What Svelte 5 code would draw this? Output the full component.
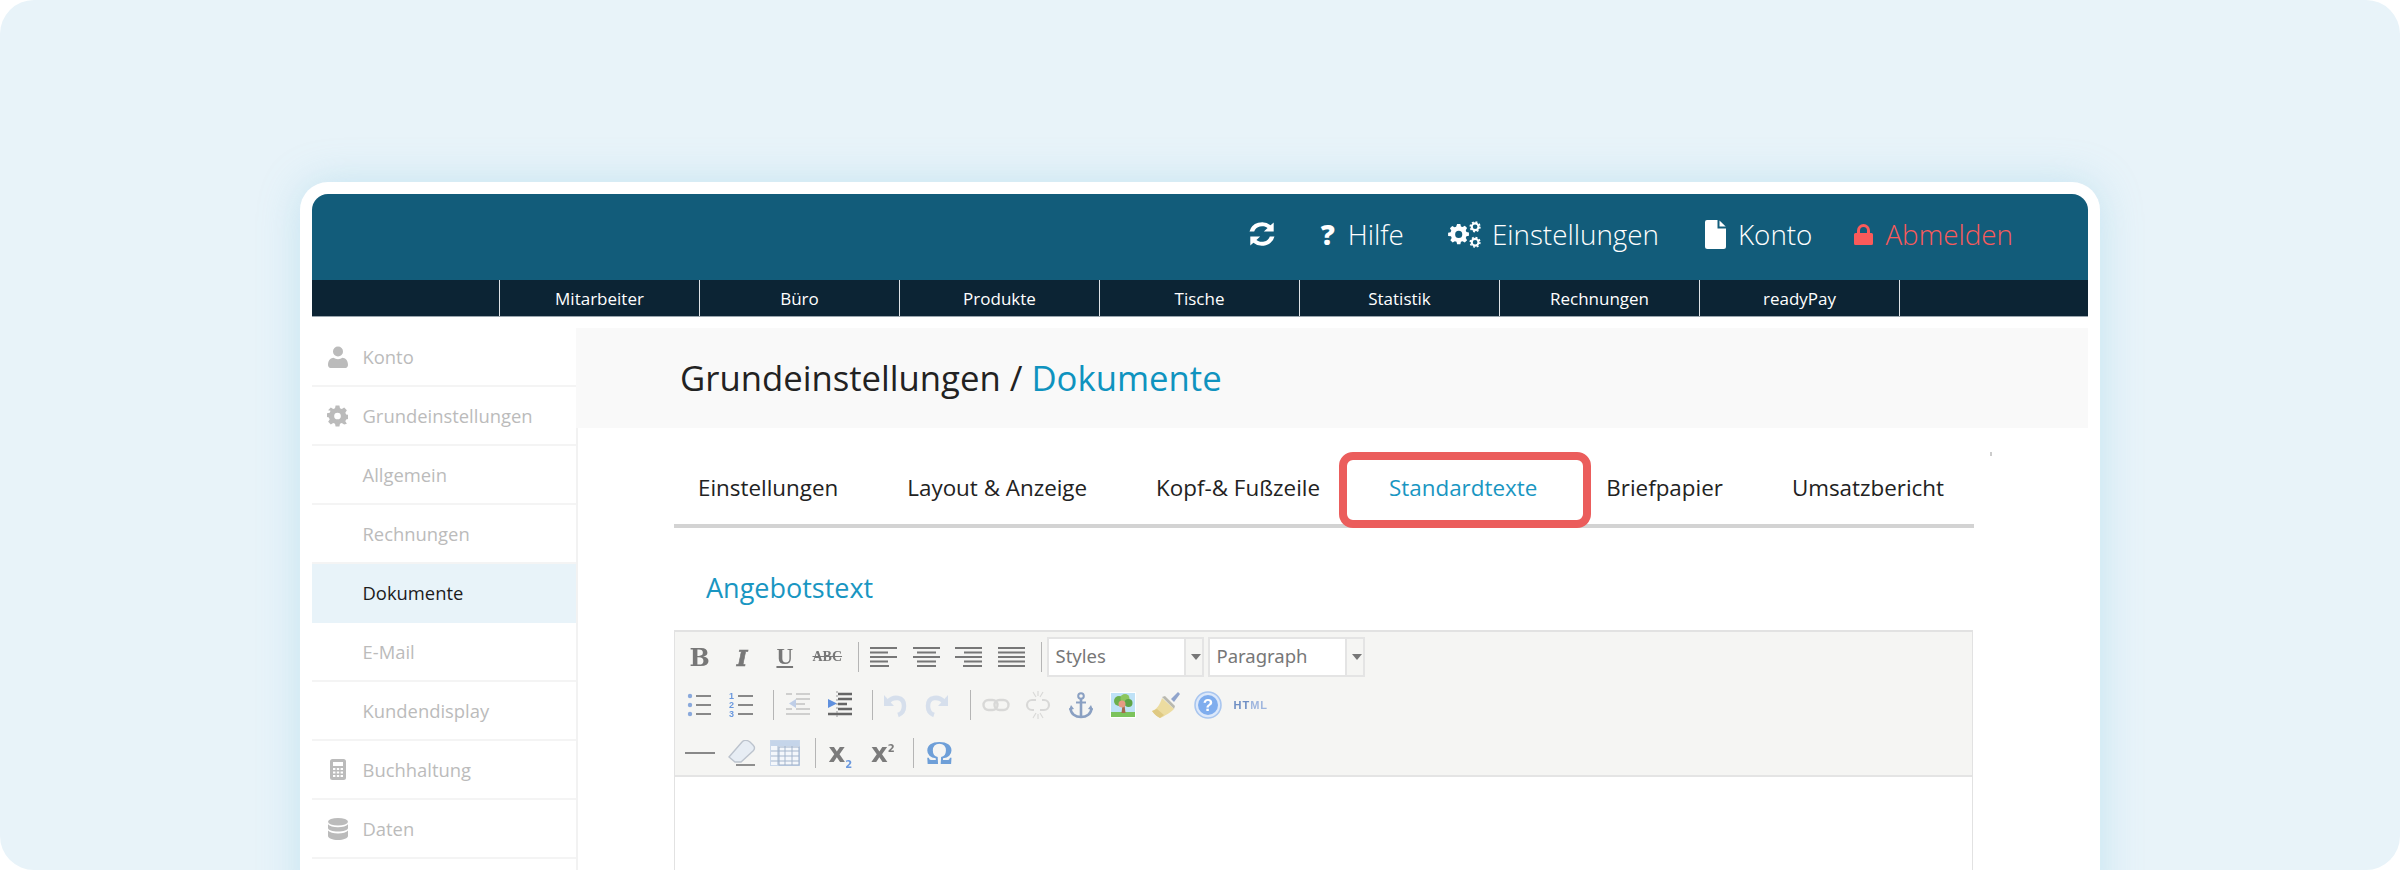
<script>
  const subNav = ['Mitarbeiter', 'Büro', 'Produkte', 'Tische', 'Statistik', 'Rechnungen', 'readyPay'];
  const side = [
    { label: 'Konto', icon: 'user' },
    { label: 'Grundeinstellungen', icon: 'gear' },
    { label: 'Allgemein' },
    { label: 'Rechnungen' },
    { label: 'Dokumente', active: true },
    { label: 'E-Mail' },
    { label: 'Kundendisplay' },
    { label: 'Buchhaltung', icon: 'calc' },
    { label: 'Daten', icon: 'db' }
  ];
  const tabs = ['Einstellungen', 'Layout & Anzeige', 'Kopf-& Fußzeile', 'Standardtexte', 'Briefpapier', 'Umsatzbericht'];
</script>

<div class="page">
  <div class="card">
    <div class="inner">
      <header class="top">
        <svg class="ico refresh" viewBox="2 2 20 20" fill="#fff" preserveAspectRatio="none">
          <path d="M21 2.400v7.600h-7.600l2.900-2.900A6.300 6.300 0 0 0 6 10H2.400A9.800 9.800 0 0 1 18.600 4.800z"/>
          <path d="M3 21.600V14h7.600l-2.900 2.900A6.300 6.300 0 0 0 18 14h3.600A9.800 9.800 0 0 1 5.400 19.200z"/>
        </svg>
        <a class="tl"><b class="q">?</b>Hilfe</a>
        <a class="tl tight">
          <svg class="ico cogs" viewBox="0 0 34 28" fill="#fff">
            <path fill-rule="evenodd" transform="translate(-1 -3)" d="M10.300 6h3.400l.6 2.600 1.700.7 2.300-1.400 2.400 2.400-1.400 2.300.7 1.700 2.600.6v3.400l-2.600.6-.7 1.700 1.400 2.300-2.400 2.400-2.300-1.400-1.700.7-.6 2.600h-3.400l-.6-2.600-1.700-.7-2.300 1.400-2.400-2.400 1.400-2.300-.7-1.700L1 18.600v-3.400l2.600-.6.7-1.700-1.400-2.300 2.400-2.400 2.300 1.400 1.700-.7zM12 13.200a3.700 3.700 0 1 0 0 7.400 3.700 3.700 0 0 0 0-7.400z"/>
            <g fill="none" stroke="#fff">
              <circle cx="28" cy="6" r="3.500" stroke-width="2.200"/>
              <circle cx="28" cy="6" r="5" stroke-width="1.600" stroke-dasharray="2 1.900"/>
              <circle cx="28" cy="22" r="3.500" stroke-width="2.200"/>
              <circle cx="28" cy="22" r="5" stroke-width="1.600" stroke-dasharray="2 1.900"/>
            </g>
          </svg>
          Einstellungen
        </a>
        <a class="tl">
          <svg class="ico file" viewBox="0 0 21 29" fill="#fff"><path d="M2 0H12.500V8.500H21V26.500A2.500 2.500 0 0 1 18.500 29H2.500A2.500 2.500 0 0 1 0 26.500V2A2 2 0 0 1 2 0z"/><path d="M14.500.5 20.700 6.500H14.500z"/></svg>
          Konto
        </a>
        <a class="tl red">
          <svg class="ico lock" viewBox="0 0 19 21" fill="#fa5a5a"><path d="M3 9V6.500a6.500 6.500 0 0 1 13 0V9h1.500A1.500 1.500 0 0 1 19 10.500v9A1.500 1.500 0 0 1 17.500 21H1.500A1.500 1.500 0 0 1 0 19.500v-9A1.500 1.500 0 0 1 1.500 9zM6 9h7V6.500a3.500 3.500 0 0 0-7 0z"/></svg>
          Abmelden
        </a>
      </header>

      <nav class="sub">
        {#each subNav as s}
          <span class="si">{s}</span>
        {/each}
      </nav>

      <div class="body">
        <aside class="side">
          {#each side as item}
            <div class="row" class:active={item.active}>
              <span class="ri">
                {#if item.icon === 'user'}
                  <svg viewBox="0 0 20 22" width="20" height="22" fill="#bbb"><circle cx="10" cy="5.500" r="5"/><path d="M0 19c0-5 3-7 5.500-7.200 1.300.9 2.800 1.400 4.500 1.400s3.200-.5 4.500-1.400C17 12 20 14 20 19c0 1.500-1 3-2.500 3h-15C1 22 0 20.500 0 19z"/></svg>
                {:else if item.icon === 'gear'}
                  <svg viewBox="0 0 22 22" width="21" height="22" fill="#bbb"><path fill-rule="evenodd" d="M9 0h4l.6 2.900 1.900.8L18 2.100l2.800 2.900-1.600 2.500.8 1.900 2.900.6v4l-2.900.6-.8 1.900 1.600 2.500L18 20l-2.500-1.600-1.900.8L13 22H9l-.6-2.800-1.900-.8L4 20l-2.800-2.900 1.600-2.500-.8-1.900-2-.6v-4l2.900-.6.8-1.900L1.100 5 4 2.100l2.500 1.600 1.900-.8zM11 7.500a3.500 3.500 0 1 0 0 7 3.500 3.500 0 0 0 0-7z"/></svg>
                {:else if item.icon === 'calc'}
                  <svg viewBox="0 0 16 21" width="16" height="21"><rect width="16" height="21" rx="2.500" fill="#bbb"/><rect x="3" y="3" width="10" height="4" fill="#fff"/><g fill="#fff"><rect x="3" y="9" width="2.400" height="2"/><rect x="6.800" y="9" width="2.400" height="2"/><rect x="10.600" y="9" width="2.400" height="2"/><rect x="3" y="12.500" width="2.400" height="2"/><rect x="6.800" y="12.500" width="2.400" height="2"/><rect x="10.600" y="12.500" width="2.400" height="2"/><rect x="3" y="16" width="2.400" height="2"/><rect x="6.800" y="16" width="2.400" height="2"/><rect x="10.600" y="16" width="2.400" height="2"/></g></svg>
                {:else if item.icon === 'db'}
                  <svg viewBox="0 0 20 22" width="20" height="22" fill="#bbb"><ellipse cx="10" cy="3.800" rx="10" ry="3.800"/><path d="M0 6.200c1.500 2 5.500 3 10 3s8.500-1 10-3V10c0 2-4.500 3.500-10 3.500S0 12 0 10z"/><path d="M0 12.400c1.500 2 5.500 3 10 3s8.500-1 10-3V18c0 2.200-4.500 4-10 4S0 20.200 0 18z"/></svg>
                {/if}
              </span>
              <span>{item.label}</span>
            </div>
          {/each}
        </aside>

        <main class="main">
          <div class="title">Grundeinstellungen / <span>Dokumente</span></div>
          <div class="content">
            <i class="tick"></i>
            <div class="tabs">
              {#each tabs as t, i}
                <span class="tab" class:on={i === 3}>{t}</span>
              {/each}
            </div>
            <h2>Angebotstext</h2>

            <div class="editor">
              <div class="toolbar">
                <div class="tr">
                  <span class="b bold">B</span>
                  <span class="b ital">I</span>
                  <span class="b und">U</span>
                  <span class="b abc">ABC</span>
                  <i class="sep a1"></i>
                  {#each ['l','c','r','j'] as a}
                    <span class="b"><svg width="27" height="22" viewBox="0 0 27 22" stroke="#777" stroke-width="1.800">
                      {#if a === 'l'}<path d="M0 2h27M0 6.500h18M0 11h27M0 15.500h18M0 20h19"/>
                      {:else if a === 'c'}<path d="M0 2h27M4 6.500h19M0 11h27M4 15.500h19M4 20h19"/>
                      {:else if a === 'r'}<path d="M0 2h27M9 6.500h18M0 11h27M9 15.500h18M8 20h19"/>
                      {:else}<path d="M0 2h27M0 6.500h27M0 11h27M0 15.500h27M0 20h27"/>{/if}
                    </svg></span>
                  {/each}
                  <i class="sep a2"></i>
                  <div class="combo"><span>Styles</span><em></em></div>
                  <div class="combo"><span>Paragraph</span><em></em></div>
                </div>

                <div class="tr">
                  <span class="b"><svg width="26" height="26" viewBox="0 0 26 26"><g fill="#8aa9dc"><circle cx="3" cy="4" r="2.200"/><circle cx="3" cy="13" r="2.200"/><circle cx="3" cy="22" r="2.200"/></g><path d="M9 4h15M9 13h15M9 22h15" stroke="#888" stroke-width="1.800"/></svg></span>
                  <span class="b"><svg width="26" height="30" viewBox="0 0 26 30"><text x="0" y="9" class="nt">1</text><text x="0" y="18" class="nt">2</text><text x="0" y="27" class="nt">3</text><path d="M9 6h15M9 15h15M9 24h15" stroke="#888" stroke-width="1.800"/></svg></span>
                  <i class="sep b1"></i>
                  <span class="b faint"><svg width="28" height="28" viewBox="0 0 28 28"><path d="M12 3h14M12 8h14M12 13h9M12 18h14M2 23h24M2 3h6M2 18h6" stroke="#aaa" stroke-width="2"/><path d="M12 8 5 12.500l7 4.500z" fill="#8aa9dc"/></svg></span>
                  <span class="b"><svg width="28" height="28" viewBox="0 0 28 28"><path d="M12 3h14M12 8h14M12 13h9M12 18h14M2 23h24" stroke="#666" stroke-width="2.400"/><path d="M11 12.500 2 8v9z" fill="#5f90de"/><path d="M11 0v28" stroke="#999" stroke-dasharray="2 2"/></svg></span>
                  <i class="sep b2"></i>
                  <span class="b faint2"><svg width="24" height="26" viewBox="0 0 24 26" fill="none" stroke="#8aa9dc" stroke-width="4.500"><path d="M5 10c5-6 16-6 16 4 0 5-3 8-6 9"/><path d="M1 3v11h10z" fill="#8aa9dc" stroke="none"/></svg></span>
                  <span class="b faint2 mir"><svg width="24" height="26" viewBox="0 0 24 26" fill="none" stroke="#8aa9dc" stroke-width="4.500"><path d="M5 10c5-6 16-6 16 4 0 5-3 8-6 9"/><path d="M1 3v11h10z" fill="#8aa9dc" stroke="none"/></svg></span>
                  <i class="sep b3"></i>
                  <span class="b faint3"><svg width="28" height="14" viewBox="0 0 28 14" fill="none" stroke="#999" stroke-width="2.400"><rect x="1.500" y="2" width="14" height="10" rx="5"/><rect x="12.500" y="2" width="14" height="10" rx="5"/></svg></span>
                  <span class="b faint3"><svg width="28" height="28" viewBox="0 0 28 28" fill="none" stroke="#999" stroke-width="2.200"><path d="M12 9H8a5 5 0 0 0 0 10h2M16 19h4a5 5 0 0 0 0-10h-2"/><path d="M9 1l3 5M19 1l-3 5M14 0v5M9 27l3-5M19 27l-3-5M14 28v-5" stroke-width="1.200"/></svg></span>
                  <span class="b"><svg width="24" height="27" viewBox="0 0 24 27" fill="none" stroke="#8aa0c2" stroke-width="2.600"><circle cx="12" cy="4" r="2.800" stroke-width="2"/><path d="M12 7v18"/><path d="M7 10.500h10" stroke-width="2"/><path d="M1.500 16c0 6 5 9 10.500 9s10.500-3 10.500-9"/><path d="M0 18l2-5 3 4z" fill="#8aa0c2" stroke="none"/><path d="M24 18l-2-5-3 4z" fill="#8aa0c2" stroke="none"/></svg></span>
                  <span class="b"><svg width="26" height="26" viewBox="0 0 26 26"><rect width="26" height="26" fill="#fff"/><rect x="1" y="1" width="24" height="20" fill="#bfe2f7"/><rect x="1" y="20" width="24" height="5" fill="#7cc35c"/><path d="M11.500 21l1-8h2l1 8z" fill="#a56a4c"/><circle cx="9" cy="9" r="5" fill="#6cb04c"/><circle cx="15" cy="6.500" r="4.500" fill="#8cc65e"/><circle cx="18.500" cy="11" r="4" fill="#5fa546"/><circle cx="12" cy="12" r="3.500" fill="#e79b83"/></svg></span>
                  <span class="b"><svg width="30" height="28" viewBox="0 0 30 28"><path d="M20 8l7-7 2 2-6 8z" fill="#90a4cc"/><path d="M11 6l3-1 10 10-1 3z" fill="#b9b9b0"/><path d="M11 7 23 18c-3 3-9 7-14 9-2-1-5-3-8-7 4-1 8-6 10-13z" fill="#ecdca0"/><path d="M9 27c-2-1-5-3-8-7l5-2 7 6z" fill="#dfc982"/></svg></span>
                  <span class="b"><svg width="28" height="28" viewBox="0 0 28 28"><circle cx="14" cy="14" r="13" fill="#dce8fa" stroke="#a9c6ef" stroke-width="1.600"/><circle cx="14" cy="14" r="10" fill="#7fadee"/><text x="14" y="20" text-anchor="middle" class="qm">?</text></svg></span>
                  <span class="b htm">HT<span>ML</span></span>
                </div>

                <div class="tr">
                  <span class="b"><svg width="30" height="4" viewBox="0 0 30 4"><path d="M0 2h30" stroke="#888" stroke-width="2"/></svg></span>
                  <span class="b"><svg width="28" height="26" viewBox="0 0 28 26"><path d="M1 17 14 2c2-2 5-2 8 0l3 3c2 2 2 4 0 6L13 22H7z" fill="#e7edf4" stroke="#bcc3cd" stroke-width="1.400"/><path d="M8 25h19" stroke="#8f8f8f" stroke-width="2"/></svg></span>
                  <span class="b"><svg width="30" height="26" viewBox="0 0 30 26"><rect x=".5" y=".5" width="29" height="25" fill="#f4f7fb" stroke="#c9d7ea"/><rect x="1" y="1" width="28" height="5" fill="#c5d5ea"/><path d="M1 11h28M1 16h28M1 21h28M8 6v19M15 6v19M22 6v19" stroke="#a5b6cd"/><rect x="9" y="7" width="20" height="18" fill="none" stroke="#9cafc9"/></svg></span>
                  <i class="sep c1"></i>
                  <span class="b sx"><span>x<sub>2</sub></span></span>
                  <span class="b sx"><span>x<sup>2</sup></span></span>
                  <i class="sep c2"></i>
                  <span class="b om">Ω</span>
                </div>
              </div>
              <div class="area"></div>
            </div>
          </div>
        </main>
      </div>
    </div>
  </div>
</div>

<style>
  :global(body) { margin: 0; background: #fff; overflow: hidden; }
  .page {
    width: 2400px; height: 870px; box-sizing: border-box; overflow: hidden;
    background: #e8f3f9; border-radius: 34px;
    padding: 182px 300px 0;
    font-family: "Open Sans", "Liberation Sans", sans-serif;
  }
  .card {
    height: 720px; background: #fff; border-radius: 28px; padding: 12px;
    box-shadow: 0 0 40px rgba(130, 200, 225, .35);
  }
  .inner { height: 100%; }
  .top {
    height: 86px; background: #125c7a; border-radius: 16px 16px 0 0;
    display: flex; align-items: center; justify-content: flex-end;
    padding: 0 75px 6px 0; color: #fff; font-size: 27.800px; font-weight: 300; box-sizing: border-box;
  }
  .tl { display: flex; align-items: center; margin-left: 46px; }
  .tl.tight { margin-left: 44px; }
  .tl.red { color: #fa5a5a; margin-left: 42px; }
  .q { font-weight: 800; margin-right: 13px; }
  .ico { display: block; }
  .refresh { width: 26px; height: 24px; }
  .cogs { width: 33px; height: 27px; margin-right: 11px; }
  .file { width: 21px; height: 29px; margin-right: 12px; }
  .lock { width: 19px; height: 21px; margin-right: 12px; }

  .sub {
    height: 37px; background: #0c2434; display: flex; padding-left: 187px;
    box-sizing: border-box; border-bottom: 1px solid #9aa6ae;
  }
  .si {
    width: 200px; box-sizing: border-box; border-left: 1px solid #dfe3e6;
    color: #fff; font-size: 17px; text-align: center; line-height: 37px;
  }
  .si:last-child { width: 201px; border-right: 1px solid #dfe3e6; }

  .body { display: flex; padding-top: 11px; }
  .side { width: 264px; flex: none; border-right: 2px solid #f2f2f2; }
  .row {
    height: 59px; box-sizing: border-box; border-bottom: 2px solid #f4f4f4;
    display: flex; align-items: center; font-size: 18.400px; color: #bbb;
  }
  .row.active { background: #e8f3f9; color: #1c1c1c; border-bottom-color: #e8f3f9; }
  .ri { width: 50.500px; flex: none; display: flex; justify-content: center; padding-left: 1px; box-sizing: border-box; }

  .main { flex: 1; min-width: 0; }
  .title {
    height: 100px; background: #f9f9f9; box-sizing: border-box; padding-left: 104px; margin-left: -2px;
    font-size: 34.700px; line-height: 100px; color: #222;
  }
  .title span { color: #0f93bf; }
  .content { padding-left: 96px; position: relative; }
  .tick { position: absolute; left: 1412px; top: 24px; width: 2px; height: 4px; background: #ccc; }
  .tabs {
    width: 1300px; height: 100px; box-sizing: border-box; border-bottom: 4px solid #d3d3d3;
    display: flex; align-items: center; padding: 23px 0 0 24px;
    font-size: 22.400px; color: #222;
  }
  .tab { margin-right: 69px; position: relative; white-space: nowrap; }
  .tab.on { color: #1996c2; }
  .tab.on::after {
    content: ""; position: absolute; left: -50px; right: -54px; top: -20px; height: 76px;
    border: 8px solid #eb5d5c; border-radius: 14px; box-sizing: border-box;
  }
  h2 {
    margin: 0; padding-left: 32px; font-size: 27px; font-weight: 400; color: #1996c2;
    height: 102px; line-height: 120px; box-sizing: border-box;
  }
  .editor { width: 1299px; border: 1px solid #e2e2e2; border-top-width: 2px; border-bottom: 0; height: 240px; box-sizing: border-box; }
  .toolbar {
    height: 145px; background: #f5f5f3; border-bottom: 2px solid #e4e4e4; box-sizing: border-box;
    padding-top: 1px;
  }
  .tr { display: flex; align-items: center; height: 48px; padding-left: 3.500px; }
  .tr :global(svg) { filter: blur(.4px); display: block; }
  .b { width: 42.500px; flex: none; display: flex; align-items: center; justify-content: center; color: #777; filter: blur(.3px); }
  .bold { font: 700 24px "DejaVu Serif", serif; }
  .ital { font: italic 700 23px "DejaVu Serif", serif; -webkit-text-stroke: .6px #777; }
  .und { font: 700 23px "Liberation Serif", serif; text-decoration: underline; }
  .abc { font: 700 14px "Liberation Serif", serif; text-decoration: line-through; }
  .sep { width: 1px; height: 30px; background: #b5b5b5; flex: none; }
  .a1 { margin: 0 4px 0 9px; }
  .a2 { margin: 0 5px 0 8px; }
  .b1 { margin: 0 3px 0 9px; }
  .b2 { margin: 0 1px 0 10px; }
  .b3 { margin: 0 4px 0 11px; }
  .c1 { margin: 0 3px 0 9px; }
  .c2 { margin: 0 4px 0 9px; }
  .faint { opacity: .5; }
  .faint2 { opacity: .28; }
  .faint3 { opacity: .3; }
  .mir :global(svg) { transform: scaleX(-1); }
  .nt { font: 700 9px "Liberation Sans", sans-serif; fill: #6a98de; }
  .qm { font: 700 17px "Liberation Sans", sans-serif; fill: #fff; }
  .htm { font: 700 11px "Liberation Sans", sans-serif; color: #6f8fc4; letter-spacing: 1px; }
  .htm span { color: #9fb6de; }
  .sx { font: 700 26px "DejaVu Sans", sans-serif; color: #7b7b7b; }
  .sx sub, .sx sup { font-size: 10px; line-height: 0; color: #6a98de; }
  .sx sup { color: #7b7b7b; }
  .om { font: 700 34px "Liberation Serif", serif; color: #6e9fd8; }
  .combo {
    width: 157px; height: 40px; flex: none; box-sizing: border-box; border: 2px solid #e4e4e4;
    display: flex; margin-right: 4px; font-size: 18.500px; color: #777;
    font-family: "Noto Sans", sans-serif;
    background: #f5f5f3;
  }
  .combo span { width: 137px; flex: none; background: #fff; padding-left: 7px; box-sizing: border-box; line-height: 34px; border-right: 2px solid #e4e4e4; }
  .combo em { flex: 1; position: relative; }
  .combo em::after {
    content: ""; position: absolute; left: 5px; top: 15px;
    border: 5px solid transparent; border-top: 6px solid #777; border-bottom: 0;
  }
  .area { background: #fff; }
</style>
